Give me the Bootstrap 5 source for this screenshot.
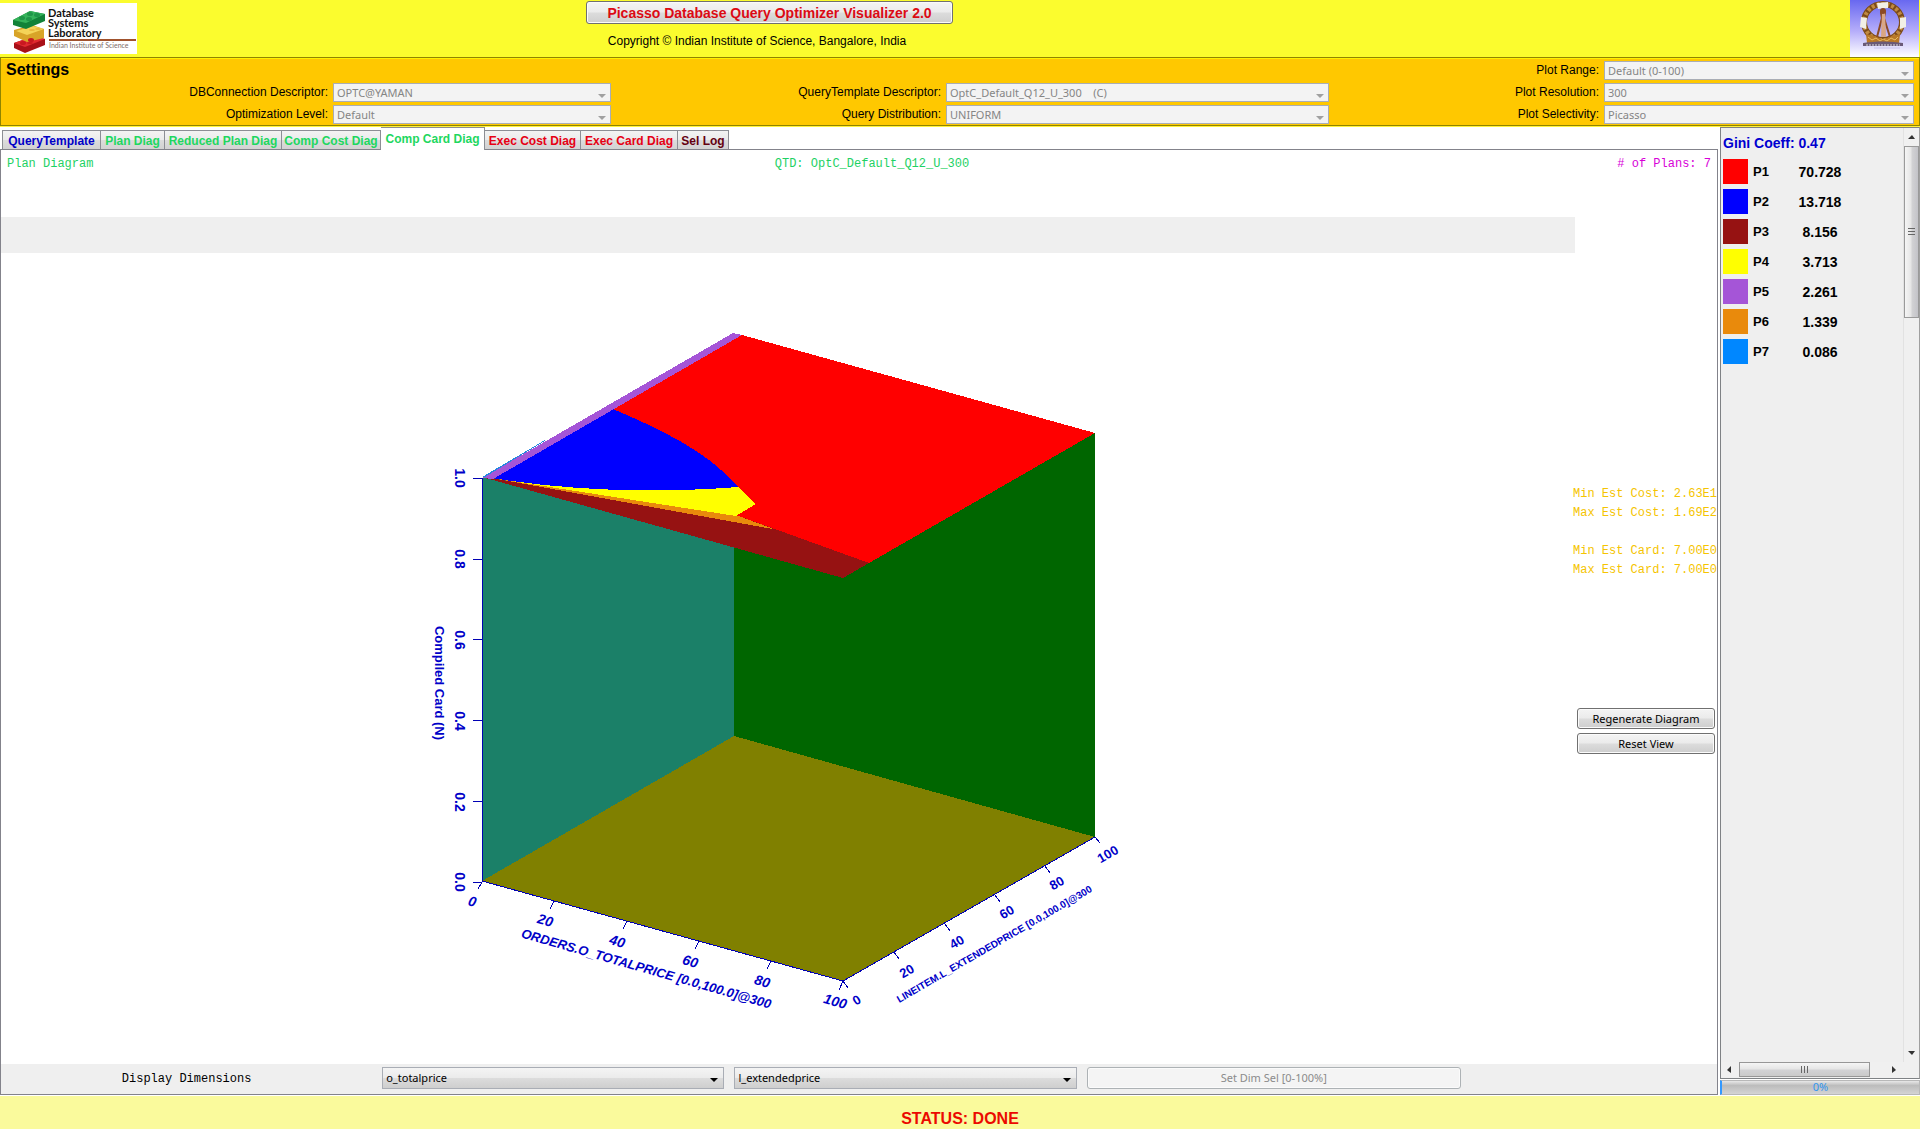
<!DOCTYPE html>
<html lang="en">
<head>
<meta charset="utf-8">
<meta name="viewport" content="width=device-width, initial-scale=1">
<title>Picasso Database Query Optimizer Visualizer 2.0</title>
<link rel="stylesheet" href="https://cdn.jsdelivr.net/npm/bootstrap@5.3.0/dist/css/bootstrap.min.css">
<style>
body { font-family: "Liberation Sans", Arial, sans-serif; font-size: 12px; line-height: 16px; color: #000; background: #fff; }
.ui-font { font-family: "Noto Sans", Tahoma, sans-serif; font-size: 11px; }
.mono { font-family: "Liberation Mono", "Courier New", monospace; font-size: 12px; line-height: 19px; white-space: pre; }

/* header */
.top-banner { background: #fbfc2e; height: 57px; }
.banner-side { flex: 1 1 0; }
.brand-box { width: 137px; height: 51px; background: #fff; margin-top: 3px; }
.banner-mid { margin-right: 381px; }
.copyright-line { padding: 9px 25px 0 0; }
.swing-btn { border: 1px solid #707070; border-radius: 3px; background: linear-gradient(#f4f4f4, #ebebeb 48%, #dcdcdc 52%, #cecece); color: #000; padding: 0 8px; line-height: 18px; box-shadow: inset 0 0 0 1px #fbfbfb; }
.title-btn { color: #dc0a14; font-size: 14px; font-weight: bold; width: 367px; height: 23px; margin-top: 1px; line-height: 20px; }

/* settings */
.settings-panel { background: #ffc800; border: 1px solid #8f8400; box-shadow: inset 0 1px 0 #fff000, 0 1px 0 #fff23c; height: 69px; position: relative; padding: 3px 5px 0 0; }
.settings-title { font-size: 16px; font-weight: bold; line-height: 17px; padding-left: 5px; }
.settings-grid { display: grid; gap: 3px 0; grid-template-columns: 332fr 278fr 335fr 383fr 275fr 310fr; }
.settings-grid label { text-align: right; padding-right: 5px; line-height: 19px; white-space: nowrap; font-size: 12px; }
.settings-grid .pick { height: 19px; }
.pick { appearance: none; width: 100%; padding: 0 18px 0 3px; border: 1px solid #a9adb5; border-radius: 0; color: #000; line-height: 16px;
  background: url("data:image/svg+xml,%3Csvg xmlns='http://www.w3.org/2000/svg' width='8' height='4'%3E%3Cpath d='M0 0h8L4 4z' fill='%23000'/%3E%3C/svg%3E") no-repeat right 5px top 10px, linear-gradient(#f4f4f4, #ebebeb 48%, #dcdcdc 52%, #cecece); }
.pick:disabled { color: #858585; opacity: 1;
  background: url("data:image/svg+xml,%3Csvg xmlns='http://www.w3.org/2000/svg' width='8' height='4'%3E%3Cpath d='M0 0h8L4 4z' fill='%23a0a0a0'/%3E%3C/svg%3E") no-repeat right 4px top 10px, #f3f3f3; }

/* tabs */
.workspace { padding-top: 1px; }
.tab-strip { padding: 1px 0 0 2px; height: 22px; align-items: flex-end; }
.tab-item { border: 1px solid #8c8e94; border-left-width: 0; border-bottom: 0; background: linear-gradient(#f3f3f3, #ebebeb 48%, #dcdcdc 52%, #d2d2d2); font-weight: bold; font-size: 12px; height: 19px; line-height: 20px; padding: 0; text-align: center; white-space: nowrap; overflow: visible; }
.tab-item:first-child { border-left-width: 1px; }
.tab-item.current { background: #fff; height: 23px; margin-bottom: -1px; line-height: 21px; position: relative; }
.t-blue { color: #0000c8; } .t-green { color: #1ed760; } .t-red { color: #e60014; } .t-maroon { color: #640010; }
.w-98 { width: 99px; } .w-64 { width: 64px; } .w-117 { width: 117px; } .w-99 { width: 99px; } .w-104 { width: 104px; } .w-96 { width: 96px; } .w-97 { width: 97px; } .w-50 { width: 51px !important; }
.diagram-panel { border: 1px solid #83838b; }
.left-pane { margin-right: 2px; }
.c-plan { color: #1ed164; } .c-count { color: #d800d8; } .c-est { color: #f5c400; }
.head-line { padding: 5px 6px 0 6px; height: 67px; }
.head-line > * { flex: 1 1 0; }
.head-line .head-mid { padding-left: 26px; }
.blank-band { background: #efefef; height: 36px; }
.side-tools { width: 142px; padding: 268px 0 0 0; }
.side-tools .mono { margin-left: -2px; }
.side-tools .swing-btn { height: 21px; margin: 0 2px 4px 2px; }
.tool-stack { margin-top: 128px; }
.dim-bar { background: #efefef; height: 30px; padding: 3px 0 4px; }
.dim-grid { display: grid; grid-template-columns: 371fr 342fr 342fr 374fr 246fr; column-gap: 10px; }
.dim-grid .pick, .dim-grid .swing-btn { height: 22px; }
.dim-grid .swing-btn:disabled { color: #8b8b8b; background: #f4f4f4; border-color: #adb2b5; }
.dim-grid label { line-height: 25px; text-align: center; }

/* legend */
.legend-col { width: 200px; }
.legend-box { background: #efefef; border: 1px solid #7f8285; border-right-color: #a0a0a0; }
.gini { color: #0000d0; font-size: 14px; font-weight: bold; line-height: 18px; padding: 6px 0 7px 2px; }
.plan-table { border-collapse: separate; border-spacing: 0; font-weight: bold; font-size: 14px; line-height: 26px; }
.plan-table td, .plan-table th { padding: 0 0 4px; vertical-align: top; }
.plan-table th { width: 43px; font-size: 13px; }
.plan-table td:last-child { width: 60px; text-align: center; padding-right: 12px; }
.swatch { width: 25px; height: 25px; margin: 0 5px 0 2px; }
.p1 { background: #f00; } .p2 { background: #00f; } .p3 { background: #961212; } .p4 { background: #ff0; } .p5 { background: #a555d7; } .p6 { background: #e98a0c; } .p7 { background: #0087ff; }
.v-scroll { width: 16px; background: #f0f0f0; border-left: 1px solid #e2e2e2; }
.v-thumb { width: 15px; height: 172px; border: 1px solid #9a9a9a; background: linear-gradient(90deg, #f5f5f5, #e6e6e6 45%, #d2d2d4 55%, #c3c3c8); }
.h-scroll { height: 16px; background: #f0f0f0; }
.h-thumb { width: 131px; height: 15px; border: 1px solid #979797; background: linear-gradient(#f5f5f5, #e6e6e6 45%, #d2d2d4 55%, #cacaca); }
.progress-strip { height: 15px; margin-top: 1px; border: 1px solid #b8b8b8; border-left: 2px solid #3399ff; background: linear-gradient(#e8e8e8, #bcbcbc 35%, #d4d4d4); color: #3296f0; line-height: 12px; text-align: center; border-radius: 0; }
.status-line { background: #fafa9c; color: #eb0a00; font-size: 16px; font-weight: bold; line-height: 20px; padding: 13px 0 0; margin-top: 1px; text-align: center; }
.axis { fill: #0000c8; font-weight: bold; font-family: "Liberation Sans", Arial, sans-serif; text-anchor: middle; }
</style>
<script src="https://cdn.jsdelivr.net/npm/bootstrap@5.3.0/dist/js/bootstrap.bundle.min.js"></script>
</head>
<body class="d-flex flex-column min-vh-100">

<header class="top-banner d-flex">
  <div class="banner-side">
    <div class="brand-box">
      <svg width="137" height="51" viewBox="0 3 137 51" role="img" aria-label="Database Systems Laboratory">
        <path d="M14 43l20-7 11 3v6l-20 8-11-5z" fill="#a81018"/><path d="M14 43l20-7 11 3-20 8z" fill="#e02a30"/>
        <path d="M14 30l18-5 12 4v9l-17 4-13-6z" fill="#d8a428"/><path d="M16 31l17-5 11 3-17 6z" fill="#f4d458"/>
        <path d="M13 20l17-9 15 3v7l-19 8-13-4z" fill="#128238"/><path d="M13 20l17-9 15 3-19 9z" fill="#35b35a"/>
        <g fill="#1f9648"><ellipse cx="22" cy="18" rx="3" ry="2"/><ellipse cx="30" cy="14" rx="3" ry="2"/><ellipse cx="29" cy="19" rx="3" ry="2"/><ellipse cx="37" cy="15" rx="3" ry="2"/></g>
        <g fill="#e9b93c"><ellipse cx="32" cy="30" rx="3" ry="1"/><ellipse cx="38" cy="29" rx="3" ry="1"/></g>
        <g fill="#c81820"><ellipse cx="23" cy="43" rx="3" ry="2"/><ellipse cx="31" cy="40" rx="3" ry="2"/><ellipse cx="30" cy="43" rx="3" ry="1"/></g>
        <g font-family="Lato, sans-serif" font-weight="bold" font-size="11" fill="#111"><text x="48" y="17">Database</text><text x="48" y="27">Systems</text><text x="48" y="37">Laboratory</text></g>
        <path d="M49 40h87" stroke="#a0522d" stroke-width="2"/>
        <text x="49" y="48" font-family="Lato, sans-serif" font-size="7" fill="#7d6c68">Indian Institute of Science</text>
      </svg>
    </div>
  </div>
  <div class="banner-mid text-center">
    <button type="button" class="swing-btn title-btn">Picasso Database Query Optimizer Visualizer 2.0</button>
    <div class="copyright-line">Copyright © Indian Institute of Science, Bangalore, India</div>
  </div>
  <div class="banner-side text-end">
    <svg width="70" height="57" viewBox="0 0 70 57" class="d-block ms-auto" role="img" aria-label="Institute emblem">
      <defs><linearGradient id="sky" x1="0" y1="0" x2="0" y2="1"><stop offset="0" stop-color="#6868f0"/><stop offset=".55" stop-color="#b6aefa"/><stop offset="1" stop-color="#fff"/></linearGradient></defs>
      <path fill="url(#sky)" d="M0 0h69v57H0z"/>
      <ellipse cx="33" cy="22" rx="19" ry="18" fill="none" stroke="#7b4a1a" stroke-width="6"/>
      <ellipse cx="33" cy="22" rx="19" ry="18" fill="none" stroke="#c08a42" stroke-width="4" stroke-dasharray="3 2"/>
      <path d="M16 34l9 2 8 4 8-4 9-2-1 9H17z" fill="#b87828"/>
      <path d="M18 37l4 3 4-2 4 3 3-2 4 2 4-3 4 2 3-3" stroke="#e8bc60" fill="none"/>
      <path d="M27 3l11-1v6l-10 1zM11 17l6 1-1 11-6-2zM50 18l6-1v10l-6 2z" fill="#f2efe6"/>
      <path d="M33 9l-2 4 1 5-5 19M33 9l2 4-1 5 6 19" fill="none" stroke="#8c4a24" stroke-width="2"/><path d="M32 12h3l1 25h-5z" fill="#d9a684"/><circle cx="33" cy="11" r="3" fill="#8c4a24"/>
      <path d="M13 43c14-2 27-2 40 0v3H13z" fill="#6a5a78"/><path d="M16 45h34" stroke="#ddd" stroke-dasharray="2 1"/>
      <path d="M24 48h26" stroke="#c9c4ee"/>
    </svg>
  </div>
</header>

<section class="settings-panel">
  <div class="settings-grid">
    <div class="settings-title">Settings</div><span></span><span></span><span></span>
    <label for="range">Plot Range:</label>
    <select id="range" class="pick ui-font" disabled><option>Default (0-100)</option></select>
    <label for="dbc">DBConnection Descriptor:</label>
    <select id="dbc" class="pick ui-font" disabled><option>OPTC@YAMAN</option></select>
    <label for="qtd">QueryTemplate Descriptor:</label>
    <select id="qtd" class="pick ui-font" disabled><option>OptC_Default_Q12_U_300 &nbsp;&nbsp; (C)</option></select>
    <label for="res">Plot Resolution:</label>
    <select id="res" class="pick ui-font" disabled><option>300</option></select>
    <label for="opt">Optimization Level:</label>
    <select id="opt" class="pick ui-font" disabled><option>Default</option></select>
    <label for="dist">Query Distribution:</label>
    <select id="dist" class="pick ui-font" disabled><option>UNIFORM</option></select>
    <label for="sel">Plot Selectivity:</label>
    <select id="sel" class="pick ui-font" disabled><option>Picasso</option></select>
  </div>
</section>

<main class="d-flex workspace flex-grow-1">
  <div class="left-pane d-flex flex-column flex-grow-1">
    <div class="tab-strip d-flex" role="tablist">
      <button type="button" role="tab" class="tab-item t-blue w-98">QueryTemplate</button>
      <button type="button" role="tab" class="tab-item t-green w-64">Plan Diag</button>
      <button type="button" role="tab" class="tab-item t-green w-117">Reduced Plan Diag</button>
      <button type="button" role="tab" class="tab-item t-green w-99">Comp Cost Diag</button>
      <button type="button" role="tab" class="tab-item t-green w-104 current" aria-selected="true">Comp Card Diag</button>
      <button type="button" role="tab" class="tab-item t-red w-96">Exec Cost Diag</button>
      <button type="button" role="tab" class="tab-item t-red w-97">Exec Card Diag</button>
      <button type="button" role="tab" class="tab-item t-maroon w-50">Sel Log</button>
    </div>
    <div class="diagram-panel flex-grow-1 d-flex flex-column">
      <div class="head-line mono d-flex">
        <span class="c-plan">Plan Diagram</span>
        <span class="c-plan head-mid text-center">QTD: OptC_Default_Q12_U_300</span>
        <span class="c-count text-end"># of Plans: 7</span>
      </div>
      <div class="d-flex flex-grow-1">
        <div class="flex-grow-1">
          <div class="blank-band"></div>
          <svg class="d-block w-100" viewBox="1 253 1574 811" role="img" aria-label="Compiled cardinality plan diagram">
            <g shape-rendering="crispEdges">
              <path fill="#1b8068" d="M482 478L734 333V736L482 881z"/>
              <path fill="#006600" d="M733 333L1095 433V837L734 736z"/>
              <path fill="#808000" d="M482 881L734 736L1095 837L843 981z"/>
              <path fill="#ff0000" d="M742 335L1095 433L869 563L736 516L600 440L613 409z"/>
              <path fill="#961212" d="M482 477L736 515L869 563L843 578z"/>
              <path fill="#e98a0c" d="M492 478L736 515L775 529.5z"/>
              <path fill="#ffff00" d="M492 478L640 487L738 487L756 504L736 516z"/>
              <path fill="#0000ff" d="M492 478L613 409C655 427 707 450 738 487Q608 497 492 478z"/>
              <path fill="#a555d7" d="M482 478L733 333L742 335L493 479z"/>
              <path fill="#2387e0" d="M482 477L545 440L545 441L485 477z"/>
              <path fill="none" stroke="#0000b4" d="M482 478V881L843 981L1095 837M473 478h9M473 559h9M473 639h9M473 720h9M473 801h9M473 882h9M482 882l-4 7M554 901l-4 8M627 921l-4 8M699 941l-4 8M771 961l-4 8M843 981l-4 9M843 981l5 7M894 952l5 7M945 924l5 7M995 895l5 7M1045 866l5 7M1095 837l5 6"/>
            </g>
            <g class="axis" font-size="14">
              <text transform="translate(455 478) rotate(90)">1.0</text>
              <text transform="translate(455 559) rotate(90)">0.8</text>
              <text transform="translate(455 640) rotate(90)">0.6</text>
              <text transform="translate(455 721) rotate(90)">0.4</text>
              <text transform="translate(455 802) rotate(90)">0.2</text>
              <text transform="translate(455 882) rotate(90)">0.0</text>
            </g>
            <text class="axis" font-size="13" transform="translate(435 683) rotate(90)">Compiled Card (N)</text>
            <g class="axis" font-size="14" font-style="italic">
              <text transform="translate(471 906) rotate(16)">0</text>
              <text transform="translate(544 925) rotate(16)">20</text>
              <text transform="translate(616 946) rotate(16)">40</text>
              <text transform="translate(689 966) rotate(16)">60</text>
              <text transform="translate(761 986) rotate(16)">80</text>
              <text transform="translate(834 1006) rotate(16)">100</text>
            </g>
            <text class="axis" font-size="13" font-style="italic" transform="translate(645 973) rotate(16)">ORDERS.O_TOTALPRICE [0.0,100.0]@300</text>
            <g class="axis" font-size="13">
              <text transform="translate(859 1004) rotate(-30)">0</text>
              <text transform="translate(909 975) rotate(-30)">20</text>
              <text transform="translate(959 946) rotate(-30)">40</text>
              <text transform="translate(1009 916) rotate(-30)">60</text>
              <text transform="translate(1059 887) rotate(-30)">80</text>
              <text transform="translate(1110 858) rotate(-30)">100</text>
            </g>
            <text class="axis" font-size="10" transform="translate(996 947) rotate(-30)">LINEITEM.L_EXTENDEDPRICE [0.0,100.0]@300</text>
          </svg>
        </div>
        <div class="side-tools d-flex flex-column flex-shrink-0">
          <div class="mono c-est">Min Est Cost: 2.63E1
Max Est Cost: 1.69E2

Min Est Card: 7.00E0
Max Est Card: 7.00E0</div>
          <div class="tool-stack d-flex flex-column">
            <button type="button" class="swing-btn ui-font">Regenerate Diagram</button>
            <button type="button" class="swing-btn ui-font">Reset View</button>
          </div>
        </div>
      </div>
      <div class="dim-bar">
        <div class="dim-grid">
          <label class="mono" for="dimx">Display Dimensions</label>
          <select id="dimx" class="pick ui-font"><option>o_totalprice</option></select>
          <select class="pick ui-font" aria-label="Second dimension"><option>l_extendedprice</option></select>
          <button type="button" class="swing-btn ui-font" disabled>Set Dim Sel [0-100%]</button>
        </div>
      </div>
    </div>
  </div>

  <aside class="legend-col d-flex flex-column flex-shrink-0">
    <div class="legend-box flex-grow-1 d-flex flex-column">
      <div class="d-flex flex-grow-1">
        <div class="flex-grow-1">
          <div class="gini">Gini Coeff: 0.47</div>
          <table class="plan-table">
            <tbody>
              <tr><td><div class="swatch p1"></div></td><th scope="row">P1</th><td>70.728</td></tr>
              <tr><td><div class="swatch p2"></div></td><th scope="row">P2</th><td>13.718</td></tr>
              <tr><td><div class="swatch p3"></div></td><th scope="row">P3</th><td>8.156</td></tr>
              <tr><td><div class="swatch p4"></div></td><th scope="row">P4</th><td>3.713</td></tr>
              <tr><td><div class="swatch p5"></div></td><th scope="row">P5</th><td>2.261</td></tr>
              <tr><td><div class="swatch p6"></div></td><th scope="row">P6</th><td>1.339</td></tr>
              <tr><td><div class="swatch p7"></div></td><th scope="row">P7</th><td>0.086</td></tr>
            </tbody>
          </table>
        </div>
        <div class="v-scroll d-flex flex-column align-items-center">
          <svg width="15" height="18" class="flex-shrink-0"><path d="M4 11h7l-3-4z" fill="#333"/></svg>
          <div class="v-thumb d-flex align-items-center justify-content-center"><svg width="7" height="8"><path d="M0 .5h7M0 3.5h7M0 6.5h7" stroke="#666"/></svg></div>
          <svg width="15" height="18" class="mt-auto flex-shrink-0"><path d="M4 7h7l-3 4z" fill="#333"/></svg>
        </div>
      </div>
      <div class="h-scroll d-flex">
        <svg width="18" height="16"><path d="M10 4v7l-4-3z" fill="#333"/></svg>
        <div class="h-thumb d-flex align-items-center justify-content-center"><svg width="8" height="7"><path d="M.5 0v7M3.5 0v7M6.5 0v7" stroke="#666"/></svg></div>
        <svg width="34" height="16"><path d="M22 4v7l4-3z" fill="#333"/></svg>
      </div>
    </div>
    <div class="progress-strip ui-font" role="progressbar" aria-label="Progress" aria-valuenow="0" aria-valuemin="0" aria-valuemax="100">0%</div>
  </aside>
</main>

<footer class="status-line">STATUS: DONE</footer>
</body>
</html>
